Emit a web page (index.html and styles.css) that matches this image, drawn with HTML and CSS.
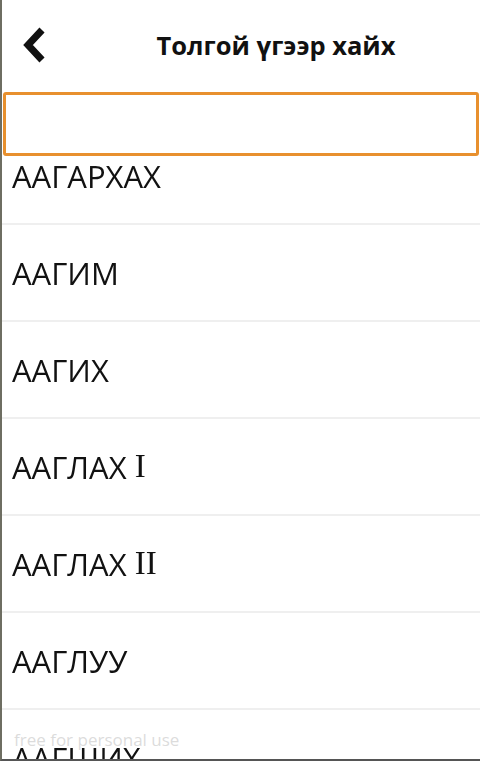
FILE: index.html
```html
<!DOCTYPE html>
<html lang="mn">
<head>
<meta charset="utf-8">
<title>Толгой үгээр хайх</title>
<link rel="stylesheet" href="styles.css">
</head>
<body>
<div class="app">
  <header class="header">
    <div class="back">
      <svg width="26" height="36" viewBox="0 0 26 36" aria-hidden="true">
        <polyline points="20,3 6,18 20,33" fill="none" stroke="#111" stroke-width="7" stroke-linejoin="miter" stroke-linecap="butt"/>
      </svg>
    </div>
    <h1 class="title">Толгой үгээр хайх</h1>
  </header>
  <div class="search"><input class="search-input" type="text" aria-label="search"></div>
  <div class="list">
    <div class="list-inner">
      <div class="row">ААГАРХАХ</div>
      <div class="row">ААГИМ</div>
      <div class="row">ААГИХ</div>
      <div class="row">ААГЛАХ <span class="roman">I</span></div>
      <div class="row">ААГЛАХ <span class="roman">II</span></div>
      <div class="row">ААГЛУУ</div>
      <div class="row">ААГШИХ</div>
    </div>
    <div class="watermark">free for personal use</div>
  </div>
</div>
</body>
</html>
```
FILE: styles.css
```css
html, body {
  margin: 0;
  padding: 0;
  background: #fff;
}
body {
  width: 480px;
  height: 761px;
  overflow: hidden;
  font-family: "Open Sans", "Noto Sans", sans-serif;
}
.app {
  box-sizing: border-box;
  width: 480px;
  height: 761px;
  border-left: 2px solid #6e6e62;
  border-bottom: 2px solid #555;
  display: flex;
  flex-direction: column;
  background: #fff;
}
.header {
  height: 92px;
  display: flex;
  align-items: center;
  flex-shrink: 0;
}
.back {
  width: 70px;
  display: flex;
  justify-content: flex-start;
  padding-left: 20px;
  box-sizing: border-box;
  margin-top: -2px;
}
.title {
  flex: 1;
  margin: 0;
  text-align: center;
  font-size: 25.5px;
  font-weight: 700;
  color: #111;
  margin-top: -2px;
}
.search {
  flex-shrink: 0;
  padding: 0 0 0 1px;
}
.search-input {
  display: block;
  box-sizing: border-box;
  width: 476px;
  height: 64px;
  border: 3px solid #e8902e;
  border-radius: 3px;
  background: #fff;
  outline: none;
  margin: 0;
}
.list {
  position: relative;
  flex: 1;
  overflow: hidden;
}
.list-inner {
  margin-top: -28px;
  -webkit-mask-image: linear-gradient(to bottom, transparent 0, #000 40px, #000 calc(100% - 40px), transparent 100%);
  mask-image: linear-gradient(to bottom, transparent 0, #000 40px, #000 calc(100% - 40px), transparent 100%);
}
.row {
  box-sizing: border-box;
  height: 97px;
  border-bottom: 2px solid #efefef;
  display: flex;
  align-items: center;
  padding-left: 10px;
  font-size: 31px;
  color: #111;
  white-space: pre;
}
.roman {
  font-family: "Liberation Serif", serif;
  font-size: 33px;
}
.watermark {
  position: absolute;
  left: 12px;
  bottom: 8px;
  font-size: 17px;
  color: rgba(190, 190, 190, 0.55);
}
```
